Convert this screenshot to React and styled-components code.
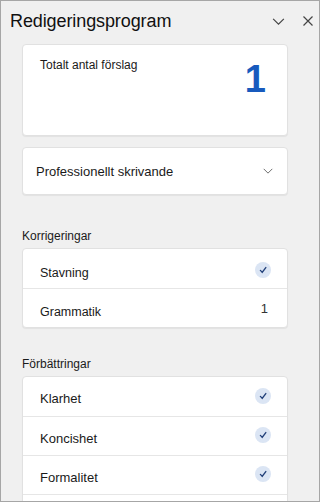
import React from "react";
import styled, { createGlobalStyle } from "styled-components";

const Global = createGlobalStyle`
  html, body { margin: 0; padding: 0; }
  body { width: 320px; height: 502px; overflow: hidden; background: #f0f0f0; font-family: "Liberation Sans", Arial, sans-serif; }
`;

const Pane = styled.div`
  box-sizing: border-box;
  width: 320px;
  height: 502px;
  border: 1px solid #a6a6a6;
  background: #f0f0f0;
  overflow: hidden;
  display: flex;
  flex-direction: column;
`;

const Header = styled.div`
  flex-shrink: 0;
  display: flex;
  align-items: center;
  height: 40px;
  padding: 0 0 0 9px;
`;

const Title = styled.h1`
  flex: 1;
  margin: 0;
  font-size: 18px;
  font-weight: 400;
  color: #111;
  letter-spacing: -0.1px;
`;

const IconBtn = styled.button`
  width: ${(p) => p.$w}px;
  margin-right: ${(p) => p.$mr || 0}px;
  height: 24px;
  border: 0;
  background: none;
  padding: 0;
  display: flex;
  align-items: center;
  justify-content: center;
  color: #444;
`;

const Body = styled.div`
  flex-shrink: 0;
  padding: 3px 31px 0 21px;
  display: flex;
  flex-direction: column;
`;

const Card = styled.div`
  background: #fff;
  border: 1px solid #e1e1e1;
  border-radius: 4px;
  box-shadow: 0 1px 1px rgba(0, 0, 0, 0.06);
`;

const SummaryCard = styled(Card)`
  height: 92px;
  box-sizing: border-box;
  display: flex;
  justify-content: space-between;
  padding: 0 21px 0 17px;
`;

const SummaryLabel = styled.div`
  font-size: 12px;
  color: #1a1a1a;
  padding-top: 13px;
`;

const BigNumber = styled.div`
  font-size: 38px;
  font-weight: 700;
  color: #185abd;
  line-height: 1;
  padding-top: 15px;
`;

const SelectCard = styled(Card)`
  margin-top: 11px;
  height: 48px;
  box-sizing: border-box;
  display: flex;
  align-items: center;
  justify-content: space-between;
  padding: 0 13px 0 13px;
  font-size: 13px;
  color: #1a1a1a;
`;

const SectionLabel = styled.div`
  font-size: 12px;
  color: #1a1a1a;
  margin: ${(p) => p.$top}px 0 ${(p) => p.$bottom}px 0;
`;

const Row = styled.div`
  height: 39px;
  display: flex;
  align-items: center;
  justify-content: space-between;
  padding: ${(p) => p.$pad ?? 4}px 16px 0 17px;
  box-sizing: border-box;
  font-size: ${(p) => p.$size || 13}px;
  color: #1a1a1a;
  & + & { border-top: 1px solid #e6e6e6; }
`;

const Count = styled.span`
  font-size: 13px;
  color: #333;
  padding-right: 3px;
  margin-top: -6px;
`;

const CheckCircle = styled.span`
  width: 16px;
  height: 16px;
  border-radius: 50%;
  background: #dbe5f4;
  display: flex;
  align-items: center;
  justify-content: center;
  margin-top: -6px;
`;

const Check = () => (
  <CheckCircle>
    <svg width="10" height="10" viewBox="0 0 10 10">
      <path d="M2.4 5.4 L4.2 7.4 L7.8 2.6" fill="none" stroke="#23417a" strokeWidth="1.4" strokeLinecap="round" strokeLinejoin="round" />
    </svg>
  </CheckCircle>
);

const Chevron = ({ size = 14, color = "#555" }) => (
  <svg width={size} height={size} viewBox="0 0 14 14">
    <path d="M2 4.5 L7 9.5 L12 4.5" fill="none" stroke={color} strokeWidth="1.1" />
  </svg>
);

export default function App() {
  return (
    <>
      <Global />
      <Pane>
        <Header>
          <Title>Redigeringsprogram</Title>
          <IconBtn $w={26} $mr={6} aria-label="Minimera">
            <Chevron size={15} color="#444" />
          </IconBtn>
          <IconBtn $w={22} aria-label="Stäng">
            <svg width="12" height="12" viewBox="0 0 12 12">
              <path d="M1.5 1.5 L10.5 10.5 M10.5 1.5 L1.5 10.5" stroke="#444" strokeWidth="1.2" />
            </svg>
          </IconBtn>
        </Header>
        <Body>
          <SummaryCard>
            <SummaryLabel>Totalt antal förslag</SummaryLabel>
            <BigNumber>1</BigNumber>
          </SummaryCard>
          <SelectCard>
            <span>Professionellt skrivande</span>
            <Chevron size={12} color="#666" />
          </SelectCard>
          <SectionLabel $top={34} $bottom={5}>Korrigeringar</SectionLabel>
          <Card>
            <Row $size={12.5} $pad={8}>
              <span>Stavning</span>
              <Check />
            </Row>
            <Row $size={12.5} $pad={7}>
              <span>Grammatik</span>
              <Count>1</Count>
            </Row>
          </Card>
          <SectionLabel $top={29} $bottom={5}>Förbättringar</SectionLabel>
          <Card>
            <Row $size={13}>
              <span>Klarhet</span>
              <Check />
            </Row>
            <Row $size={13}>
              <span>Koncishet</span>
              <Check />
            </Row>
            <Row $size={13}>
              <span>Formalitet</span>
              <Check />
            </Row>
            <Row>
              <span>&nbsp;</span>
            </Row>
          </Card>
        </Body>
      </Pane>
    </>
  );
}
